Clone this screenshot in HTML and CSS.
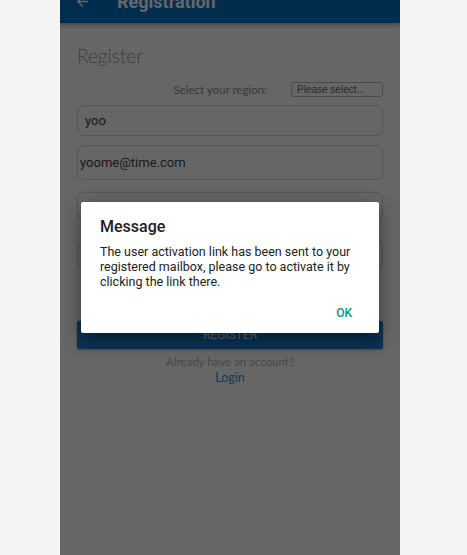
FILE: index.html
```html
<!DOCTYPE html>
<html>
<head>
<meta charset="utf-8">
<link rel="stylesheet" href="styles.css">
</head>
<body>
<div class="phone">
  <header class="appbar">
    <div class="appbar-row">
      <svg class="back" viewBox="0 0 24 24" width="17" height="17"><path d="M20 11H7.83l5.59-5.59L12 4l-8 8 8 8 1.41-1.41L7.83 13H20v-2z" fill="#fff"/></svg>
      <span class="appbar-title">Registration</span>
    </div>
  </header>
  <main class="content">
    <h1 class="heading">Register</h1>
    <div class="region-row">
      <span class="region-label">Select your region:</span>
      <div class="select">Please select...</div>
    </div>
    <div class="field f1">yoo</div>
    <div class="field f2">yoome@time.com</div>
    <div class="field f3"></div>
    <div class="field f4"></div>
    <div class="btn">REGISTER</div>
    <div class="already">Already have an account?</div>
    <div class="login">Login</div>
  </main>
  <div class="overlay">
    <div class="dialog">
      <div class="dialog-title">Message</div>
      <div class="dialog-body">The user activation link has been sent to your registered mailbox, please go to activate it by clicking the link there.</div>
      <div class="dialog-actions"><span class="ok">OK</span></div>
    </div>
  </div>
</div>
</body>
</html>
```

FILE: styles.css
```css
html, body {
  margin: 0;
  padding: 0;
  background: #f4f4f4;
}
body {
  width: 467px;
  height: 555px;
  overflow: hidden;
}
.phone {
  position: relative;
  margin-left: 60px;
  width: 340px;
  height: 555px;
  background: #fff;
  overflow: hidden;
}
.appbar {
  height: 23px;
  background: #006fc4;
  box-shadow: 0 2px 4px rgba(0,0,0,0.35);
  overflow: hidden;
  position: relative;
  z-index: 1;
}
.appbar-row {
  margin-top: -21px;
  height: 44px;
  display: flex;
  align-items: center;
  padding-left: 14px;
}
.back {
  display: block;
}
.appbar-title {
  margin-left: 26px;
  font-family: Roboto, sans-serif;
  font-weight: 700;
  font-size: 18px;
  color: #fff;
}
.content {
  padding: 0 17px;
  display: flex;
  flex-direction: column;
}
.heading {
  margin: 20px 0 0;
  font-family: Lato, sans-serif;
  font-weight: 300;
  font-size: 19px;
  line-height: 26px;
  color: #9a9a9a;
}
.region-row {
  margin-top: 13px;
  display: flex;
  justify-content: flex-end;
  align-items: center;
  height: 15px;
}
.region-label {
  font-family: Lato, sans-serif;
  font-size: 11.5px;
  line-height: 16px;
  color: #8f8f8f;
}
.select {
  margin-left: 24px;
  width: 92px;
  height: 15px;
  box-sizing: border-box;
  border: 1px solid #b8b8b8;
  border-radius: 3px;
  font-family: Arial, "Liberation Sans", sans-serif;
  font-size: 10px;
  line-height: 13px;
  padding-left: 5px;
  color: #6a6a6a;
}
.field {
  box-sizing: border-box;
  border: 1px solid #d6d6d6;
  border-radius: 7px;
  font-family: Roboto, sans-serif;
  font-size: 13px;
  color: #444;
  display: flex;
  align-items: center;
}
.f1 { margin-top: 8px; height: 31px; padding-left: 7px; }
.f2 { margin-top: 9px; height: 35px; padding-left: 2px; }
.f3 { margin-top: 12px; height: 29px; }
.f4 { margin-top: 19px; height: 29px; }
.btn {
  margin-top: 52px;
  height: 28px;
  background: #1b80d6;
  border-radius: 2px;
  color: #fff;
  font-family: Roboto, sans-serif;
  font-size: 12px;
  display: flex;
  align-items: center;
  justify-content: center;
  box-shadow: 0 1px 3px rgba(0,0,0,0.3);
}
.already {
  margin-top: 5px;
  text-align: center;
  font-family: Lato, sans-serif;
  font-size: 11.5px;
  line-height: 16px;
  color: #b4b4b4;
}
.login {
  text-align: center;
  font-family: Lato, sans-serif;
  font-size: 12.5px;
  line-height: 16px;
  color: #3a8fe0;
}
.overlay {
  position: absolute;
  inset: 0;
  z-index: 2;
  background: rgba(0,0,0,0.6);
  display: flex;
  flex-direction: column;
  align-items: center;
  padding-top: 202px;
  box-sizing: border-box;
}
.dialog {
  width: 298px;
  height: 131px;
  box-sizing: border-box;
  background: #fff;
  border-radius: 2px;
  box-shadow: 0 6px 18px rgba(0,0,0,0.45);
  padding: 15px 19px 0;
  font-family: Roboto, sans-serif;
}
.dialog-title {
  font-size: 16px;
  font-weight: 500;
  line-height: 20px;
  color: #1c1c1c;
}
.dialog-body {
  margin-top: 7px;
  font-size: 12.5px;
  line-height: 15px;
  color: #222;
}
.dialog-actions {
  margin-top: 16px;
  display: flex;
  justify-content: flex-end;
  padding-right: 8px;
}
.ok {
  font-size: 12px;
  font-weight: 500;
  line-height: 16px;
  color: #009688;
}
```
